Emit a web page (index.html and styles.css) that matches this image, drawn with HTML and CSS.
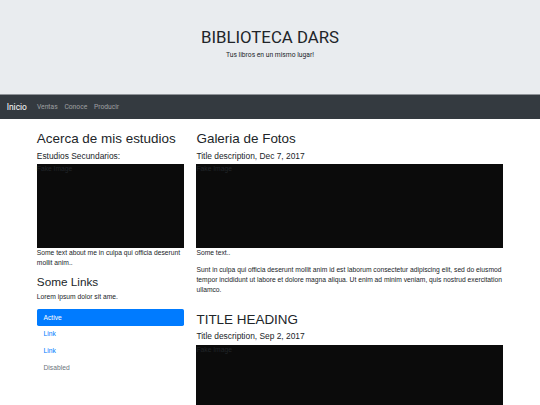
FILE: index.html
```html
<!DOCTYPE html>
<html lang="es">
<head>
    <meta charset="UTF-8">
    <meta name="viewport" content="width=device-width, initial-scale=1.0">
    <title>Biblioteca Dars</title>
    <link rel="stylesheet" href="styles.css">
</head>
<body>
    <!-- Cabecera -->
    <div class="jumbotron">
        <h1>BIBLIOTECA DARS</h1>
        <p>Tus libros en un mismo lugar!</p>
    </div>

    <nav class="navbar">
        <a class="brand" href="#">Inicio</a>
        <ul class="nav-links">
            <li><a href="#">Ventas</a></li>
            <li><a href="#">Conoce</a></li>
            <li><a href="#">Producir</a></li>
        </ul>
    </nav>

    <div class="container">
        <div class="row">
            <div class="col-side">
                <h2>Acerca de mis estudios</h2>
                <h5>Estudios Secundarios:</h5>
                <div class="fakeimg">Fake Image</div>
                <p>Some text about me in culpa qui officia deserunt mollit anim..</p>
                <h3>Some Links</h3>
                <p>Lorem ipsum dolor sit ame.</p>
                <ul class="pills">
                    <li><a class="active" href="#">Active</a></li>
                    <li><a href="#">Link</a></li>
                    <li><a href="#">Link</a></li>
                    <li><a class="disabled" href="#">Disabled</a></li>
                </ul>
            </div>
            <div class="col-main">
                <h2>Galeria de Fotos</h2>
                <h5>Title description, Dec 7, 2017</h5>
                <div class="fakeimg">Fake Image</div>
                <p>Some text..</p>
                <p>Sunt in culpa qui officia deserunt mollit anim id est laborum consectetur adipiscing elit, sed do eiusmod tempor incididunt ut labore et dolore magna aliqua. Ut enim ad minim veniam, quis nostrud exercitation ullamco.</p>
                <br>
                <h2>TITLE HEADING</h2>
                <h5>Title description, Sep 2, 2017</h5>
                <div class="fakeimg">Fake Image</div>
            </div>
        </div>
    </div>
</body>
</html>
```

FILE: styles.css
```css
html {
    font-size: 6.72px;
}
body {
    margin: 0;
    font-family: "Liberation Sans", Arial, sans-serif;
    font-size: 1rem;
    line-height: 1.5;
    color: #212529;
    background: #fff;
}
a {
    text-decoration: none;
}
h1, h2, h3, h5 {
    margin: 0 0 0.5rem;
    font-weight: 400;
    line-height: 1.2;
}
h2 {
    font-size: 2rem;
}
h3 {
    font-size: 1.75rem;
}
h5 {
    font-size: 1.25rem;
}
p {
    margin: 0 0 1rem;
}

/* cabecera */
.jumbotron {
    background-color: #e9ecef;
    padding: 4rem 2rem;
    text-align: center;
    font-family: Roboto, "Liberation Sans", sans-serif;
}
.jumbotron h1 {
    font-size: 2.5rem;
}

/* barra de navegacion */
.navbar {
    display: flex;
    align-items: center;
    background-color: #343a40;
    border-top: 1px solid #8f9398;
    padding: 0.5rem 1rem;
    height: 16.8px;
    font-family: Roboto, "Liberation Sans", sans-serif;
}
.brand {
    color: #fff;
    font-size: 1.25rem;
    margin-right: 1rem;
}
.nav-links {
    display: flex;
    list-style: none;
    margin: 0;
    padding: 0;
}
.nav-links a {
    display: block;
    padding: 0 0.5rem;
    color: rgba(255, 255, 255, 0.5);
}

/* contenido */
.container {
    width: 479px;
    margin: 12.6px auto 0;
    padding: 0 6.3px;
    box-sizing: border-box;
}
.row {
    display: flex;
    margin: 0 -6.3px;
}
.col-side,
.col-main {
    padding: 0 6.3px;
    box-sizing: border-box;
}
.col-side {
    flex: 0 0 33.3333%;
}
.col-main {
    flex: 0 0 66.6667%;
}
.fakeimg {
    height: 84px;
    background: #0b0b0b;
}

.pills {
    list-style: none;
    margin: 0;
    padding: 0;
}
.pills a {
    display: block;
    padding: 0.5rem 1rem;
    color: #007bff;
    border-radius: 0.25rem;
}
.pills a.active {
    background-color: #007bff;
    color: #fff;
}
.pills a.disabled {
    color: #6c757d;
}
```
